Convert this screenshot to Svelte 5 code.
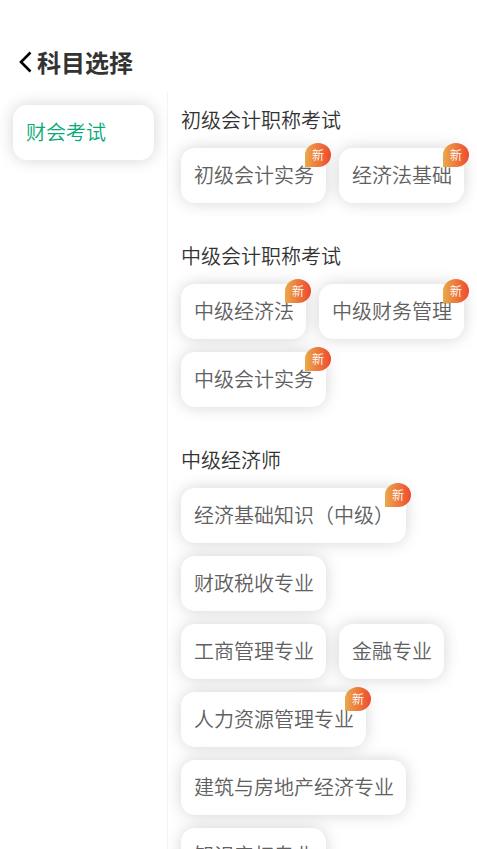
<script lang="ts">
  interface Subject {
    name: string;
    isNew?: boolean;
  }

  interface Group {
    title: string;
    subjects: Subject[];
  }

  interface Category {
    name: string;
    groups: Group[];
  }

  const categories: Category[] = [
    {
      name: '财会考试',
      groups: [
        {
          title: '初级会计职称考试',
          subjects: [
            { name: '初级会计实务', isNew: true },
            { name: '经济法基础', isNew: true }
          ]
        },
        {
          title: '中级会计职称考试',
          subjects: [
            { name: '中级经济法', isNew: true },
            { name: '中级财务管理', isNew: true },
            { name: '中级会计实务', isNew: true }
          ]
        },
        {
          title: '中级经济师',
          subjects: [
            { name: '经济基础知识（中级）', isNew: true },
            { name: '财政税收专业' },
            { name: '工商管理专业' },
            { name: '金融专业' },
            { name: '人力资源管理专业', isNew: true },
            { name: '建筑与房地产经济专业' },
            { name: '知识产权专业' }
          ]
        }
      ]
    }
  ];

  let activeIndex = $state(0);
  let active = $derived(categories[activeIndex]);
</script>

<div class="page">
  <header class="header">
    <button class="back" aria-label="返回">
      <svg viewBox="0 0 13 22" width="13" height="22">
        <path d="M11.5 1.5 L2 11 L11.5 20.5" fill="none" stroke="#000" stroke-width="2.6" />
      </svg>
    </button>
    <h1>科目选择</h1>
  </header>

  <div class="body">
    <nav class="sidebar">
      {#each categories as category, i (category.name)}
        <button class="category" class:active={i === activeIndex} onclick={() => (activeIndex = i)}>
          {category.name}
        </button>
      {/each}
    </nav>

    <main class="content">
      {#each active.groups as group (group.title)}
        <section class="group">
          <h2>{group.title}</h2>
          <div class="subjects">
            {#each group.subjects as subject (subject.name)}
              <button class="subject">
                {subject.name}
                {#if subject.isNew}
                  <span class="badge">新</span>
                {/if}
              </button>
            {/each}
          </div>
        </section>
      {/each}
    </main>
  </div>
</div>

<style>
  :global(body) {
    background: #fff;
  }

  .page {
    display: flex;
    flex-direction: column;
    height: 100vh;
    overflow: hidden;
    font-family: 'Noto Sans CJK SC', sans-serif;
    color: #333;
  }

  button {
    border: none;
    background: #fff;
    font-family: inherit;
    cursor: pointer;
  }

  .header {
    display: flex;
    align-items: center;
    gap: 5px;
    padding: 44px 19px 12px;
  }

  .back {
    display: flex;
    padding: 0;
  }

  h1 {
    margin: 0;
    font-size: 24px;
    line-height: 36px;
    font-weight: 700;
  }

  .body {
    display: flex;
    flex: 1;
    min-height: 0;
  }

  .sidebar {
    display: flex;
    flex-direction: column;
    gap: 13px;
    flex: 0 0 168px;
    box-sizing: border-box;
    padding: 13px;
    border-right: 1px solid #f3f3f3;
  }

  .category,
  .subject {
    height: 55px;
    padding: 0 12px 1px 13px;
    border-radius: 14px;
    box-shadow: 0 0 16px rgba(0, 0, 0, 0.17);
    font-size: 20px;
    font-weight: 350;
    line-height: 28px;
    color: #606060;
  }

  .category {
    text-align: left;
  }

  .category.active {
    color: #09a979;
  }

  .content {
    flex: 1;
    min-width: 0;
    padding: 14px 13px;
    overflow-y: auto;
    scrollbar-width: none;
  }

  .group {
    margin-bottom: 39px;
  }

  h2 {
    margin: 0 0 14px;
    font-size: 20px;
    line-height: 28px;
    font-weight: 350;
  }

  .subjects {
    display: flex;
    flex-wrap: wrap;
    gap: 13px;
  }

  .subject {
    position: relative;
    white-space: nowrap;
  }

  .badge {
    position: absolute;
    top: -5px;
    right: -5px;
    width: 26px;
    height: 24px;
    border-radius: 50% 50% 50% 0;
    background: linear-gradient(90deg, #eaa94a, #ef4a2e);
    color: #fff;
    font-size: 12px;
    line-height: 24px;
    text-align: center;
  }
</style>
